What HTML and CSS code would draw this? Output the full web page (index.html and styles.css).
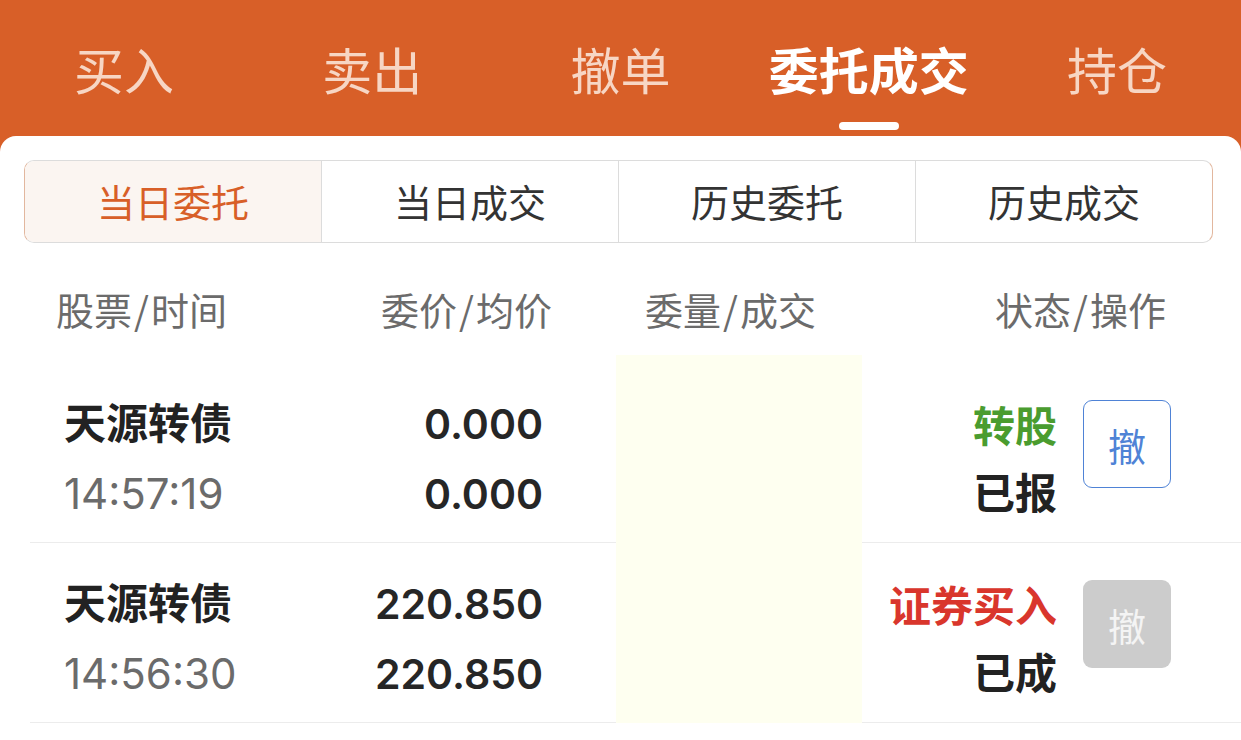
FILE: index.html
```html
<!DOCTYPE html>
<html lang="zh-CN">
<head>
<meta charset="utf-8">
<title>委托成交</title>
<link rel="stylesheet" href="styles.css">
</head>
<body>
<div class="page">
  <nav class="topnav">
    <div class="tab">买入</div>
    <div class="tab">卖出</div>
    <div class="tab">撤单</div>
    <div class="tab active">委托成交<span class="indicator"></span></div>
    <div class="tab">持仓</div>
  </nav>
  <main class="card">
    <div class="segment">
      <div class="seg active">当日委托</div>
      <div class="seg">当日成交</div>
      <div class="seg">历史委托</div>
      <div class="seg">历史成交</div>
    </div>
    <div class="thead">
      <div class="th c1">股票<span class="sl">/</span>时间</div>
      <div class="th c2">委价<span class="sl">/</span>均价</div>
      <div class="th c3">委量<span class="sl">/</span>成交</div>
      <div class="th c4">状态<span class="sl">/</span>操作</div>
    </div>
    <div class="list">
      <div class="row">
        <div class="cell c1">
          <div class="name">天源转债</div>
          <div class="time">14:57:19</div>
        </div>
        <div class="cell c2">
          <div class="num">0.000</div>
          <div class="num">0.000</div>
        </div>
        <div class="cell c3"></div>
        <div class="cell c4">
          <div class="status">
            <div class="kind green">转股</div>
            <div class="state">已报</div>
          </div>
          <div class="btn btn-active">撤</div>
        </div>
      </div>
      <div class="row">
        <div class="cell c1">
          <div class="name">天源转债</div>
          <div class="time">14:56:30</div>
        </div>
        <div class="cell c2">
          <div class="num">220.850</div>
          <div class="num">220.850</div>
        </div>
        <div class="cell c3"></div>
        <div class="cell c4">
          <div class="status">
            <div class="kind red">证券买入</div>
            <div class="state">已成</div>
          </div>
          <div class="btn btn-disabled">撤</div>
        </div>
      </div>
      <div class="mask"></div>
    </div>
  </main>
</div>
</body>
</html>
```

FILE: styles.css
```css
* { box-sizing: border-box; }
html, body {
  margin: 0;
  padding: 0;
  background: #ffffff;
}
body {
  font-family: Inter, "Noto Sans CJK SC", sans-serif;
  color: #222;
}
.page {
  background: #d85f28;
  min-height: 740px;
  display: flex;
  flex-direction: column;
}
.topnav {
  height: 136px;
  display: flex;
  padding-top: 30px;
}
.tab {
  flex: 1;
  position: relative;
  text-align: center;
  font-family: "Noto Sans CJK SC", sans-serif;
  font-size: 50px;
  line-height: 76px;
  height: 76px;
  color: #f7d6c4;
}
.tab.active {
  color: #ffffff;
  font-weight: 700;
}
.indicator {
  position: absolute;
  left: 50%;
  top: 92px;
  width: 60px;
  height: 8px;
  margin-left: -30px;
  border-radius: 4px;
  background: #ffffff;
}
.card {
  flex: 1;
  background: #ffffff;
  border-radius: 16px 16px 0 0;
  padding-top: 24px;
}
.segment {
  margin: 0 28px 0 24px;
  height: 83px;
  display: flex;
  border: 1px solid #dcdcdc;
  border-left-color: #e2b79e;
  border-right-color: #e2b79e;
  border-radius: 10px;
  overflow: hidden;
}
.seg {
  flex: 1;
  display: flex;
  align-items: center;
  justify-content: center;
  padding-bottom: 3px;
  font-family: "Noto Sans CJK SC", sans-serif;
  font-size: 38px;
  color: #333;
  border-left: 1px solid #dcdcdc;
}
.seg:first-child { border-left: none; }
.seg.active {
  background: #fbf5f1;
  color: #d85f28;
}
.thead {
  display: grid;
  grid-template-columns: 300px 222px 310px 1fr;
  margin-left: 30px;
  height: 120px;
  align-items: center;
  padding-top: 11px;
}
.th {
  font-family: "Noto Sans CJK SC", sans-serif;
  font-size: 38px;
  color: #6b6b6b;
  white-space: nowrap;
}
.sl { margin: 0 2px; }
.th.c1 { padding-left: 26px; }
.th.c2 { text-align: right; }
.th.c3 { padding-left: 93px; }
.th.c4 { text-align: right; padding-right: 75px; }
.list {
  position: relative;
  margin-left: 30px;
}
.row {
  display: grid;
  grid-template-columns: 300px 213px 319px 1fr;
  height: 180px;
  border-bottom: 1px solid #ececec;
}
.cell {
  padding-top: 26px;
}
.c1 .name, .c1 .time, .num, .kind, .state {
  height: 70px;
  line-height: 70px;
  white-space: nowrap;
}
.row .c1 { padding-left: 34px; }
.name {
  font-size: 42px;
  font-weight: 700;
  color: #222;
}
.time {
  font-size: 42px;
  color: #6b6b6b;
}
.row .c2 { text-align: right; }
.num {
  font-size: 41px;
  font-weight: 600;
  color: #262626;
}
.row .c4 {
  display: flex;
  justify-content: flex-end;
  align-items: flex-start;
  padding-right: 70px;
  gap: 26px;
}
.status {
  text-align: right;
  font-family: "Noto Sans CJK SC", sans-serif;
  font-size: 42px;
  font-weight: 700;
}
.state { margin-top: -3px; color: #222; }
.green { color: #4a9c2f; }
.red { color: #d9362c; }
.btn {
  margin-top: 11px;
  width: 88px;
  height: 88px;
  border-radius: 9px;
  display: flex;
  align-items: center;
  justify-content: center;
  font-family: "Noto Sans CJK SC", sans-serif;
  font-size: 38px;
}
.btn-active {
  border: 1.5px solid #4f83d6;
  color: #4f83d6;
  background: #ffffff;
}
.btn-disabled {
  background: #cccccc;
  color: #f4f4f4;
}
.mask {
  position: absolute;
  left: 586px;
  width: 246px;
  top: -8px;
  bottom: 0;
  background: #fefff0;
}
```
